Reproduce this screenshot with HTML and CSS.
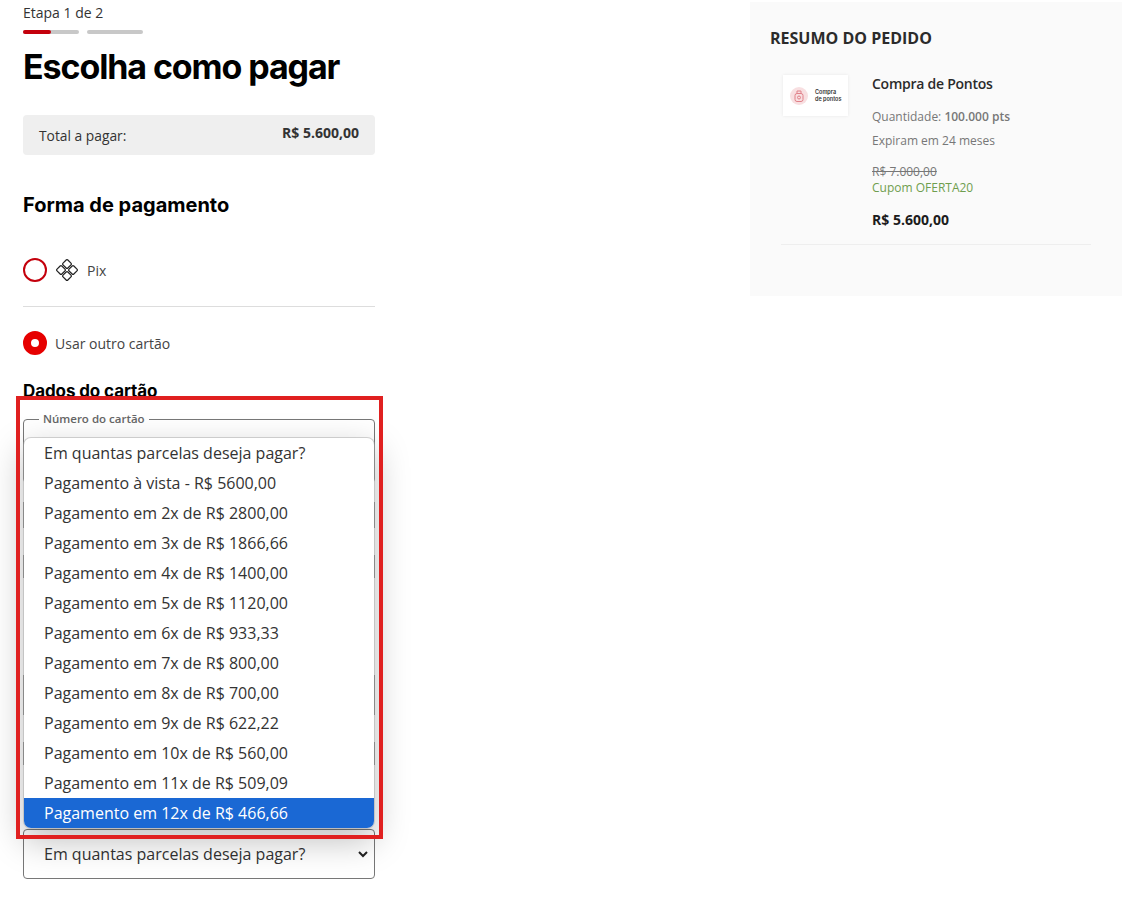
FILE: index.html
```html
<!DOCTYPE html>
<html lang="pt-BR">
<head>
  <meta charset="UTF-8">
  <title>Escolha como pagar</title>
  <link rel="stylesheet" href="styles.css">
</head>
<body>

<div class="pagina">
  <main class="coluna-pagamento">
    <p class="etapa">Etapa 1 de 2</p>
    <div class="progresso">
      <span class="barra"><span class="barra-ativa"></span></span>
      <span class="barra"></span>
    </div>
    <h1>Escolha como pagar</h1>
    <div class="total">
      <span>Total a pagar:</span>
      <strong>R$ 5.600,00</strong>
    </div>
    <h2>Forma de pagamento</h2>

    <div class="opcao opcao-pix">
      <span class="radio"></span>
      <svg class="icone-pix" width="22" height="22" viewBox="0 0 22 22" fill="none" stroke="#222" stroke-width="1.2">
        <rect x="7.6" y="1.6" width="6.8" height="6.8" rx="1.2" transform="rotate(45 11 5)"/>
        <rect x="7.6" y="13.6" width="6.8" height="6.8" rx="1.2" transform="rotate(45 11 17)"/>
        <rect x="1.6" y="7.6" width="6.8" height="6.8" rx="1.2" transform="rotate(45 5 11)"/>
        <rect x="13.6" y="7.6" width="6.8" height="6.8" rx="1.2" transform="rotate(45 17 11)"/>
      </svg>
      <span>Pix</span>
    </div>
    <div class="opcao opcao-cartao">
      <span class="radio radio-marcado"></span>
      <span>Usar outro cartão</span>
    </div>

    <h3>Dados do cartão</h3>
    <fieldset class="campo">
      <legend>Número do cartão</legend>
    </fieldset>
    <div class="campos-ocultos">
      <div></div>
      <div></div>
      <div></div>
      <div></div>
    </div>
    <div class="select-parcelas">
      <span>Em quantas parcelas deseja pagar?</span>
      <svg width="10" height="7" viewBox="0 0 10 7" fill="none" stroke="#222" stroke-width="2"><path d="M1 1l4 4 4-4"/></svg>
    </div>

    <ul class="lista-parcelas">
      <li>Em quantas parcelas deseja pagar?</li>
      <li>Pagamento à vista - R$ 5600,00</li>
      <li>Pagamento em 2x de R$ 2800,00</li>
      <li>Pagamento em 3x de R$ 1866,66</li>
      <li>Pagamento em 4x de R$ 1400,00</li>
      <li>Pagamento em 5x de R$ 1120,00</li>
      <li>Pagamento em 6x de R$ 933,33</li>
      <li>Pagamento em 7x de R$ 800,00</li>
      <li>Pagamento em 8x de R$ 700,00</li>
      <li>Pagamento em 9x de R$ 622,22</li>
      <li>Pagamento em 10x de R$ 560,00</li>
      <li>Pagamento em 11x de R$ 509,09</li>
      <li class="selecionado">Pagamento em 12x de R$ 466,66</li>
    </ul>
    <div class="destaque"></div>
  </main>

  <aside class="resumo">
    <h4>RESUMO DO PEDIDO</h4>
    <div class="item">
      <div class="miniatura">
        <span class="miniatura-icone">
          <svg width="10" height="12" viewBox="0 0 10 12" fill="none" stroke="#e08089" stroke-width="1"><rect x="1" y="3.5" width="8" height="8" rx="2"/><path d="M3 3.5V1h4v2.5"/><circle cx="5" cy="7.5" r="1.5"/></svg>
        </span>
        <span class="miniatura-texto">Compra<br>de pontos</span>
      </div>
      <div class="item-info">
        <p class="item-nome">Compra de Pontos</p>
        <p class="item-linha">Quantidade: <b>100.000 pts</b></p>
        <p class="item-linha">Expiram em 24 meses</p>
        <p class="item-antigo">R$ 7.000,00</p>
        <p class="item-cupom">Cupom OFERTA20</p>
        <p class="item-preco">R$ 5.600,00</p>
      </div>
    </div>
  </aside>
</div>

</body>
</html>
```

FILE: styles.css
```css
* {
  box-sizing: border-box;
}
html, body {
  height: 100%;
}
body {
  margin: 0;
  font-family: "Open Sans", Arial, sans-serif;
  color: #333;
  background: #fff;
  overflow: hidden;
}
p {
  margin: 0;
}
.pagina {
  display: flex;
  align-items: flex-start;
  justify-content: space-between;
  padding: 2px 9px 0 23px;
}
.coluna-pagamento {
  position: relative;
  width: 352px;
}
.etapa {
  font-size: 14px;
  line-height: 20px;
  margin-top: 1px;
}
.progresso {
  display: flex;
  gap: 8px;
  margin-top: 7px;
}
.barra {
  display: block;
  width: 56px;
  height: 4px;
  border-radius: 2px;
  background: #c8c8c8;
}
.barra-ativa {
  display: block;
  width: 28px;
  height: 4px;
  border-radius: 2px;
  background: #c4000c;
}
h1 {
  margin: 10px 0 0;
  font-family: Inter, Arial, sans-serif;
  font-size: 34px;
  line-height: 46px;
  font-weight: 700;
  letter-spacing: -1.1px;
  color: #000;
}
.total {
  display: flex;
  justify-content: space-between;
  height: 40px;
  margin-top: 25px;
  padding: 0 16px;
  border-radius: 4px;
  background: #efefef;
  font-size: 13.8px;
  line-height: 42px;
}
.total strong {
  font-size: 14px;
  line-height: 36px;
  color: #333;
}
h2 {
  margin: 36px 0 0;
  font-family: Inter, Arial, sans-serif;
  font-size: 20px;
  line-height: 28px;
  font-weight: 700;
  letter-spacing: 0;
  color: #000;
}
.opcao {
  display: flex;
  align-items: center;
  font-size: 14px;
  color: #444;
}
.opcao-pix {
  gap: 9px;
  margin-top: 39px;
  padding-bottom: 24px;
  border-bottom: 1px solid #ddd;
}
.opcao-cartao {
  gap: 8px;
  margin-top: 24px;
}
.radio {
  display: block;
  width: 24px;
  height: 24px;
  border: 2px solid #c4000c;
  border-radius: 50%;
}
.radio-marcado {
  border: 8px solid #e60000;
  background: #fff;
}
h3 {
  margin: 24px 0 0;
  font-family: Inter, Arial, sans-serif;
  font-size: 17px;
  line-height: 24px;
  font-weight: 700;
  letter-spacing: -0.1px;
  color: #000;
}
.campo {
  height: 71px;
  margin: 9px 0 0;
  padding: 0 5px;
  border: 1px solid #777;
  border-radius: 4px;
  min-width: 0;
}
.campo legend {
  padding: 0 4px;
  margin-left: 10px;
  font-size: 11.5px;
  font-weight: 600;
  line-height: 14px;
  color: #666;
}
.campos-ocultos {
  display: flow-root;
  height: 346px;
}
.campos-ocultos div {
  border: solid #777;
  border-width: 0 1px;
}
.campos-ocultos div:nth-child(1) {
  height: 26px;
  margin-top: 19px;
}
.campos-ocultos div:nth-child(2) {
  height: 23px;
  margin-top: 27px;
}
.campos-ocultos div:nth-child(3) {
  height: 40px;
  margin-top: 97px;
}
.campos-ocultos div:nth-child(4) {
  height: 23px;
  margin-top: 27px;
}
.select-parcelas {
  display: flex;
  align-items: center;
  justify-content: space-between;
  height: 50px;
  padding: 0 6px 0 20px;
  border: 1px solid #777;
  border-radius: 4px;
  font-size: 16px;
  color: #333;
}
.lista-parcelas {
  position: absolute;
  left: 0;
  top: 435px;
  width: 352px;
  margin: 0;
  padding: 0;
  list-style: none;
  overflow: hidden;
  border: 1px solid rgba(170, 170, 170, 0.5);
  border-radius: 8px;
  background: #fff;
  background-clip: padding-box;
  box-shadow: 0 12px 34px rgba(0, 0, 0, 0.25);
  font-size: 16px;
  color: #333;
}
.lista-parcelas li {
  height: 30px;
  padding-left: 20px;
  line-height: 30px;
}
.lista-parcelas .selecionado {
  background: #1a68d4;
  color: #fff;
}
.destaque {
  position: absolute;
  left: -7px;
  top: 394px;
  width: 367px;
  height: 443px;
  border: 4px solid #e02020;
}
.resumo {
  width: 372px;
  height: 294px;
  padding: 26px 20px 0;
  background: #fafafa;
}
h4 {
  margin: 0;
  font-size: 16px;
  line-height: 20px;
  font-weight: 700;
  color: #2b2b2b;
}
.item {
  display: flex;
  gap: 24px;
  height: 181px;
  margin: 16px 11px 0 11px;
  padding: 11px 0 0 2px;
  border-bottom: 1px solid #eee;
}
.miniatura {
  display: flex;
  align-items: center;
  gap: 7px;
  width: 65px;
  height: 41px;
  padding-left: 7px;
  background: #fff;
  box-shadow: 0 0 3px rgba(0, 0, 0, 0.08);
}
.miniatura-icone {
  display: flex;
  align-items: center;
  justify-content: center;
  width: 18px;
  height: 18px;
  border-radius: 50%;
  background: #f8dfe1;
}
.miniatura-texto {
  font-family: Inter, Arial, sans-serif;
  font-size: 5.5px;
  line-height: 7px;
  font-weight: 600;
  color: #333;
}
.item-info {
  margin-top: -1px;
}
.item-nome {
  font-size: 14px;
  font-weight: 600;
  line-height: 20px;
  letter-spacing: -0.25px;
  color: #2b2b2b;
}
.item-linha {
  font-size: 12px;
  line-height: 24px;
  color: #777;
}
.item-linha b {
  font-weight: 600;
}
.item-linha:nth-child(2) {
  margin-top: 11px;
}
.item-antigo {
  margin-top: 11px;
  font-size: 12px;
  line-height: 16px;
  color: #777;
  text-decoration: line-through;
}
.item-cupom {
  font-size: 12px;
  line-height: 16px;
  color: #6f9e4e;
}
.item-preco {
  margin-top: 14px;
  font-size: 14px;
  font-weight: 700;
  line-height: 20px;
  color: #1c1c1c;
}
```
